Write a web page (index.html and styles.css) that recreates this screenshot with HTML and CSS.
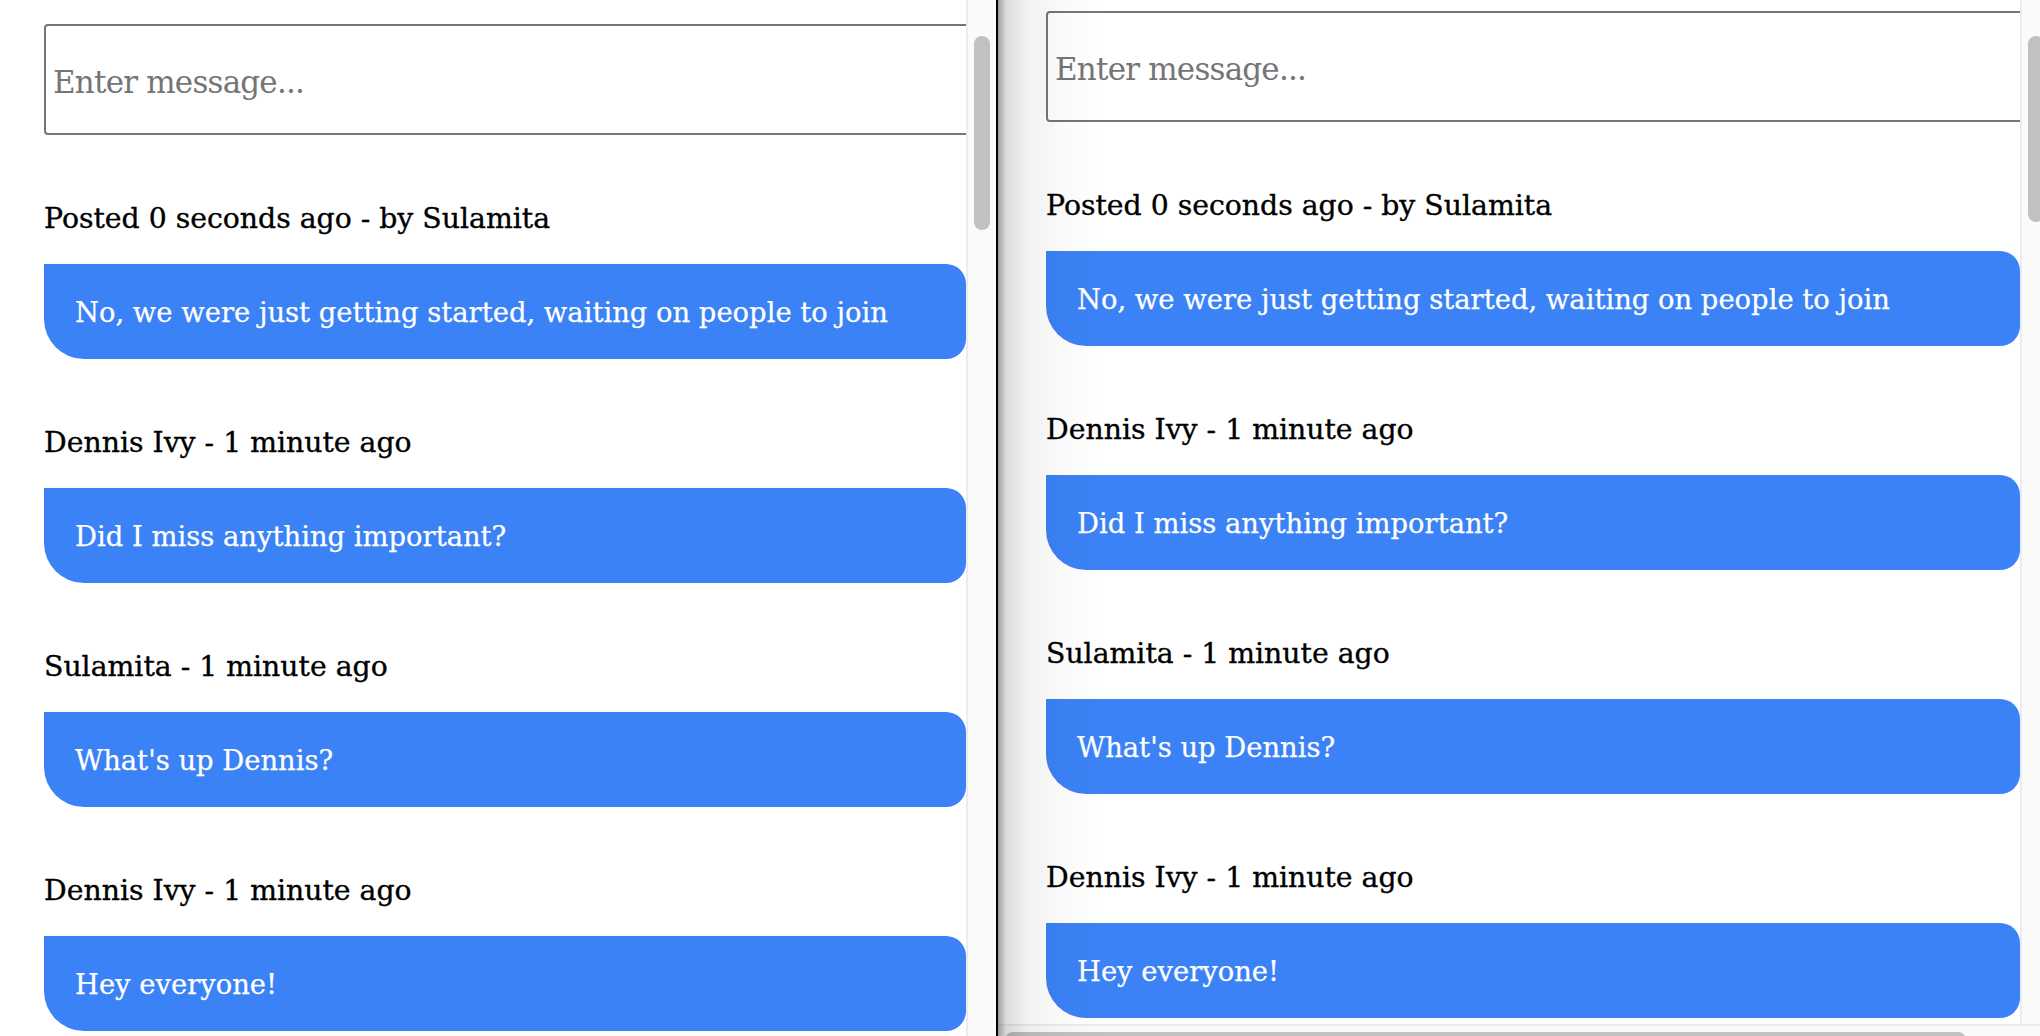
FILE: index.html
```html
<!DOCTYPE html>
<html lang="en">
<head>
<meta charset="utf-8">
<title>Chat</title>
<link rel="stylesheet" href="styles.css">
</head>
<body>
<div class="screen">
  <section class="window window-left">
    <div class="viewport">
      <div class="chat chat-left">
        <input class="composer" type="text" placeholder="Enter message...">
        <div class="message">
          <p class="meta">Posted 0 seconds ago - by Sulamita</p>
          <div class="bubble">No, we were just getting started, waiting on people to join</div>
        </div>
        <div class="message">
          <p class="meta">Dennis Ivy - 1 minute ago</p>
          <div class="bubble">Did I miss anything important?</div>
        </div>
        <div class="message">
          <p class="meta">Sulamita - 1 minute ago</p>
          <div class="bubble">What's up Dennis?</div>
        </div>
        <div class="message">
          <p class="meta">Dennis Ivy - 1 minute ago</p>
          <div class="bubble">Hey everyone!</div>
        </div>
      </div>
    </div>
    <div class="vscroll vscroll-left"><div class="thumb thumb-left"></div></div>
  </section>
  <div class="divider"></div>
  <section class="window window-right">
    <div class="main-row">
      <div class="viewport">
        <div class="chat chat-right">
          <input class="composer" type="text" placeholder="Enter message...">
          <div class="message">
            <p class="meta">Posted 0 seconds ago - by Sulamita</p>
            <div class="bubble">No, we were just getting started, waiting on people to join</div>
          </div>
          <div class="message">
            <p class="meta">Dennis Ivy - 1 minute ago</p>
            <div class="bubble">Did I miss anything important?</div>
          </div>
          <div class="message">
            <p class="meta">Sulamita - 1 minute ago</p>
            <div class="bubble">What's up Dennis?</div>
          </div>
          <div class="message">
            <p class="meta">Dennis Ivy - 1 minute ago</p>
            <div class="bubble">Hey everyone!</div>
          </div>
        </div>
      </div>
      <div class="vscroll vscroll-right"><div class="thumb thumb-right"></div></div>
    </div>
    <div class="hscroll"><div class="hthumb"></div></div>
    <div class="edge-shadow"></div>
  </section>
</div>
</body>
</html>
```

FILE: styles.css
```css
html, body {
  margin: 0;
  padding: 0;
  height: 100%;
  overflow: hidden;
  background: #ffffff;
}

.screen {
  display: flex;
  width: 2040px;
  height: 1036px;
  font-family: "DejaVu Serif", "Liberation Serif", serif;
}

.window {
  display: flex;
  overflow: hidden;
  background: #ffffff;
}

.window-left {
  flex: none;
  width: 996px;
}

.viewport {
  flex: 1;
  min-width: 0;
  overflow: hidden;
}

.chat-left {
  padding: 24px 0 0 44px;
}

.chat-right {
  padding: 11px 0 0 48px;
}

.composer {
  display: block;
  box-sizing: border-box;
  width: calc(100% + 80px);
  height: 111px;
  margin: 0;
  padding: 5px 7px 0;
  border: 2px solid #767676;
  border-radius: 4px;
  background: transparent;
  font-family: "DejaVu Serif", "Liberation Serif", serif;
  font-size: 31px;
  letter-spacing: -0.8px;
  color: #000;
  outline: none;
}

.composer::placeholder {
  color: #757575;
}

.message {
  margin-top: 67px;
}

.meta {
  margin: 0 0 29px;
  font-size: 28.3px;
  line-height: 33px;
  color: #000;
  white-space: nowrap;
  -webkit-text-stroke: 0.35px #000;
}

.bubble {
  background: #3b82f6;
  color: #ffffff;
  font-size: 27.4px;
  line-height: 33px;
  padding: 32px 31px 30px;
  border-radius: 0 20px 20px 40px;
  white-space: nowrap;
  -webkit-text-stroke: 0.25px #ffffff;
}

.vscroll {
  flex: none;
  box-sizing: border-box;
  background: #fafafa;
  border-left: 2px solid #ececec;
  padding-left: 6px;
  overflow: hidden;
}

.vscroll-left {
  width: 30px;
}

.vscroll-right {
  width: 20px;
}

.thumb {
  width: 16px;
  margin-top: 36px;
  background: #c1c1c1;
  border-radius: 8px;
}

.thumb-left {
  height: 194px;
}

.thumb-right {
  height: 186px;
}

.divider {
  flex: none;
  width: 2px;
  background: #000000;
}

.window-right {
  flex: 1;
  flex-direction: column;
  position: relative;
}

.main-row {
  display: flex;
  height: 1024px;
  flex: none;
}

.hscroll {
  flex: none;
  box-sizing: border-box;
  height: 12px;
  border-top: 2px solid #ececec;
  background: #fafafa;
  padding: 6px 0 0 7px;
  overflow: hidden;
}

.hthumb {
  width: 961px;
  height: 16px;
  background: #c1c1c1;
  border-radius: 8px;
}

.edge-shadow {
  position: absolute;
  left: 0;
  top: 0;
  bottom: 0;
  width: 110px;
  pointer-events: none;
  background: linear-gradient(to right,
    rgba(0, 0, 0, 0.38) 0px,
    rgba(0, 0, 0, 0.14) 8px,
    rgba(0, 0, 0, 0.05) 30px,
    rgba(0, 0, 0, 0.015) 70px,
    rgba(0, 0, 0, 0) 110px);
}
```
